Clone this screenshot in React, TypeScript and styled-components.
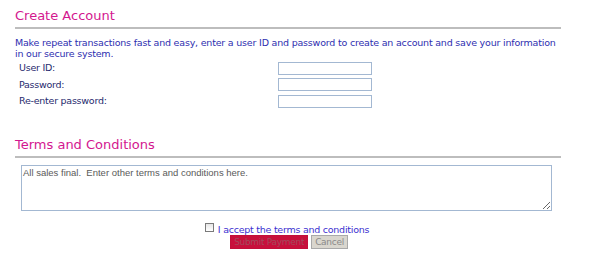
import React from "react";
import styled, { createGlobalStyle } from "styled-components";

const Global = createGlobalStyle`
  html, body { margin: 0; padding: 0; background: #ffffff; }
  body { font-family: "DejaVu Sans", Verdana, sans-serif; }
`;

const Page = styled.div`
  width: 546px;
  padding: 7px 0 0 15px;
  display: flex;
  flex-direction: column;
`;

const Heading = styled.h2<{ $top?: number }>`
  margin: ${(p) => p.$top ?? 0}px 0 0 0;
  font-family: "DejaVu Sans", Verdana, sans-serif;
  font-weight: normal;
  font-size: 13px;
  line-height: 17px;
  color: #d3178f;
`;

const Rule = styled.div`
  margin-top: 3px;
  height: 2px;
  background: #bdbdbd;
`;

const Intro = styled.p`
  margin: 8px 0 0 0;
  font-size: 9.5px;
  letter-spacing: -0.2px;
  line-height: 11px;
  color: #2e2eb0;
`;

const FormGrid = styled.div`
  margin-top: 1px;
  display: grid;
  grid-template-columns: 259px 94px;
  grid-auto-rows: 16.5px;
  padding-left: 4px;
`;

const Label = styled.label`
  font-size: 9.5px;
  letter-spacing: -0.25px;
  line-height: 16.5px;
  color: #1f2a6e;
`;

const TextBox = styled.input`
  align-self: center;
  box-sizing: border-box;
  width: 94px;
  height: 13px;
  margin: 0;
  padding: 0;
  border: 1px solid #a3b8d2;
  background: #fff;
  outline: none;
`;

const TermsBox = styled.textarea`
  box-sizing: border-box;
  margin: 7px 0 0 6px;
  width: 531px;
  height: 46px;
  padding: 1px 1px;
  border: 1px solid #a3b8d2;
  font-family: "Liberation Sans", Arial, sans-serif;
  font-size: 9.5px;
  line-height: 11px;
  color: #5a5a5a;
  resize: both;
  outline: none;
  white-space: pre-wrap;
`;

const AcceptRow = styled.div`
  margin-top: 13px;
  display: flex;
  justify-content: center;
  align-items: center;
  gap: 4px;
  padding-right: 2px;
`;

const Check = styled.input`
  appearance: none;
  margin: 0;
  width: 9px;
  height: 9px;
  box-sizing: border-box;
  border: 1px solid #7a7a7a;
  background: linear-gradient(#e6e6e6, #ffffff);
  position: relative;
  top: -2px;
`;

const AcceptText = styled.span`
  font-size: 9.5px;
  letter-spacing: -0.25px;
  line-height: 11px;
  color: #3b2fd0;
`;

const ButtonRow = styled.div`
  margin-top: 0;
  display: flex;
  justify-content: center;
  gap: 3px;
  padding-left: 2px;
`;

const Button = styled.button<{ $primary?: boolean }>`
  box-sizing: border-box;
  height: 14px;
  margin: 0;
  padding: 0 3px;
  font-family: "DejaVu Sans", Verdana, sans-serif;
  font-size: 9px;
  letter-spacing: -0.3px;
  line-height: 12px;
  border: 1px solid ${(p) => (p.$primary ? "#c20f3a" : "#a9a9a9")};
  background: ${(p) => (p.$primary ? "#c8103c" : "#d9d6ce")};
  color: ${(p) => (p.$primary ? "#a34a5c" : "#8a8a8a")};
`;

export default function App() {
  return (
    <>
      <Global />
      <Page>
        <Heading>Create Account</Heading>
        <Rule />
        <Intro>
          Make repeat transactions fast and easy, enter a user ID and password to create an
          account and save your information in our secure system.
        </Intro>
        <FormGrid>
          <Label>User ID:</Label>
          <TextBox type="text" />
          <Label>Password:</Label>
          <TextBox type="password" />
          <Label>Re-enter password:</Label>
          <TextBox type="password" />
        </FormGrid>
        <Heading $top={26}>Terms and Conditions</Heading>
        <Rule />
        <TermsBox defaultValue={"All sales final.  Enter other terms and conditions here."} />
        <AcceptRow>
          <Check type="checkbox" />
          <AcceptText>I accept the terms and conditions</AcceptText>
        </AcceptRow>
        <ButtonRow>
          <Button $primary disabled>Submit Payment</Button>
          <Button disabled>Cancel</Button>
        </ButtonRow>
      </Page>
    </>
  );
}
